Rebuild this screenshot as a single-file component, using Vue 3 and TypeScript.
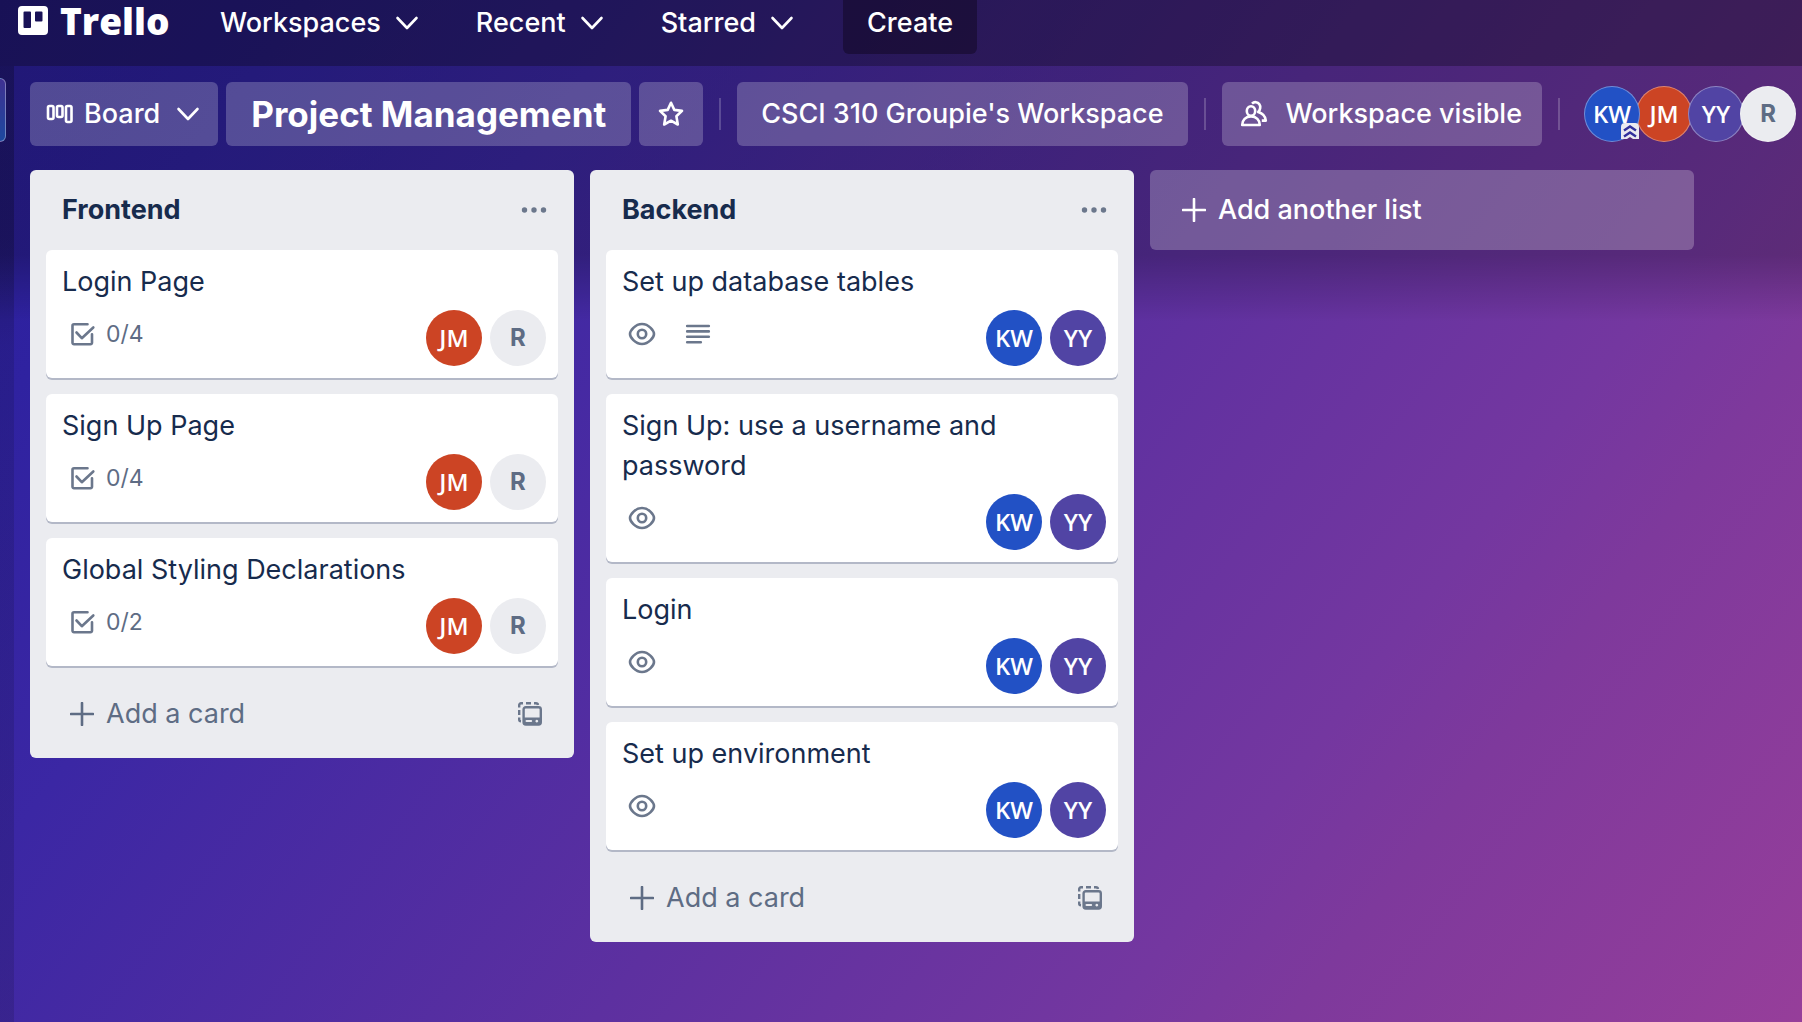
<script setup lang="ts">
interface Member {
  initials: string
  tone: string
}

interface Card {
  title: string
  watching?: boolean
  description?: boolean
  checklist?: string
  members: Member[]
}

interface List {
  name: string
  cards: Card[]
}

const kw: Member = { initials: 'KW', tone: 'blue' }
const jm: Member = { initials: 'JM', tone: 'red' }
const yy: Member = { initials: 'YY', tone: 'violet' }
const r: Member = { initials: 'R', tone: 'plain' }

const menus: string[] = ['Workspaces', 'Recent', 'Starred']
const boardMembers: Member[] = [kw, jm, yy, r]

const lists: List[] = [
  {
    name: 'Frontend',
    cards: [
      { title: 'Login Page', checklist: '0/4', members: [jm, r] },
      { title: 'Sign Up Page', checklist: '0/4', members: [jm, r] },
      { title: 'Global Styling Declarations', checklist: '0/2', members: [jm, r] },
    ],
  },
  {
    name: 'Backend',
    cards: [
      { title: 'Set up database tables', watching: true, description: true, members: [kw, yy] },
      { title: 'Sign Up: use a username and password', watching: true, members: [kw, yy] },
      { title: 'Login', watching: true, members: [kw, yy] },
      { title: 'Set up environment', watching: true, members: [kw, yy] },
    ],
  },
]
</script>

<template>
  <div class="app">
    <header class="topbar">
      <a class="logo" href="#" aria-label="Trello home">
        <svg width="30" height="30" viewBox="0 0 30 30" aria-hidden="true">
          <path
            fill="currentColor"
            fill-rule="evenodd"
            d="M4 0h22a4 4 0 0 1 4 4v21a4 4 0 0 1-4 4H4a4 4 0 0 1-4-4V4a4 4 0 0 1 4-4zm2.500 5.500a1 1 0 0 0-1 1v14.500a1 1 0 0 0 1 1h5.500a1 1 0 0 0 1-1V6.500a1 1 0 0 0-1-1zm11.500 0a1 1 0 0 0-1 1v8a1 1 0 0 0 1 1h5.500a1 1 0 0 0 1-1v-8a1 1 0 0 0-1-1z"
          />
        </svg>
        <span>Trello</span>
      </a>
      <nav class="menus">
        <button v-for="menu in menus" :key="menu" class="menu" type="button">
          {{ menu }}
          <svg width="24" height="16" viewBox="0 0 24 16" aria-hidden="true">
            <path d="M2.500 3 12 13 21.500 3" class="line" />
          </svg>
        </button>
      </nav>
      <button class="create" type="button">Create</button>
    </header>

    <div class="body">
      <aside class="rail">
        <button class="rail-toggle" type="button" aria-label="Expand sidebar"></button>
      </aside>

      <main class="board">
        <div class="board-header">
          <button class="chip view" type="button">
            <svg width="28" height="20" viewBox="0 0 28 20" aria-hidden="true">
              <g fill="none" stroke="currentColor" stroke-width="2.600">
                <rect x="2" y="2" width="5.500" height="13" rx="1.500" />
                <rect x="11" y="2" width="5.500" height="11" rx="1.500" />
                <rect x="20" y="2" width="5.500" height="16" rx="1.500" />
              </g>
            </svg>
            Board
            <svg class="caret" width="24" height="16" viewBox="0 0 24 16" aria-hidden="true">
              <path d="M2.500 3 12 13 21.500 3" class="line" />
            </svg>
          </button>
          <h1 class="chip title">Project Management</h1>
          <button class="chip star" type="button" aria-label="Star board">
            <svg width="28" height="28" viewBox="0 0 28 28" aria-hidden="true">
              <path
                d="M14 2.800 17.300 9.900 25 10.900 19.400 16.300 20.800 24.500 14 20.700 7.200 24.500 8.600 16.300 3 10.900 10.700 9.900z"
                fill="none"
                stroke="currentColor"
                stroke-width="2.600"
                stroke-linejoin="round"
              />
            </svg>
          </button>
          <span class="divider"></span>
          <button class="chip workspace" type="button">CSCI 310 Groupie's Workspace</button>
          <span class="divider"></span>
          <button class="chip visibility" type="button">
            <svg width="28" height="28" viewBox="0 0 28 28" aria-hidden="true">
              <g fill="none" stroke="currentColor" stroke-width="2.600" stroke-linejoin="round">
                <ellipse cx="11" cy="11" rx="4.200" ry="4.800" />
                <path d="M2.200 25c0-5 3.500-8.600 8.800-8.600s8.800 3.600 8.800 8.600z" />
                <path d="M12 3.600c1.200-1.200 2.600-1.600 4-1.400 3 .4 4.600 3 4.200 5.800-.2 1.800-1 3-2 4 4.500 1.300 7.200 4 7.600 8.600h-4" />
              </g>
            </svg>
            Workspace visible
          </button>
          <span class="divider"></span>
          <div class="facepile">
            <span
              v-for="(member, i) in boardMembers"
              :key="member.initials"
              class="avatar ringed"
              :class="member.tone"
            >
              {{ member.initials }}
              <svg v-if="i === 0" class="admin" width="18" height="18" viewBox="0 0 18 18" aria-hidden="true">
                <path d="M0 4q0-4 4-4h10q4 0 4 4v12H12l-3-2-3 2H0z" fill="#e9eaf0" />
                <path d="M3 7.500 9 3.500l6 4M3 13.500l6-4 6 4" fill="none" stroke="#31309c" stroke-width="2.400" />
              </svg>
            </span>
          </div>
        </div>

        <div class="lists">
          <section v-for="list in lists" :key="list.name" class="list">
            <div class="list-header">
              <h2>{{ list.name }}</h2>
              <button class="icon-button" type="button" aria-label="List actions">
                <svg width="28" height="8" viewBox="0 0 28 8" fill="currentColor" aria-hidden="true">
                  <circle cx="4.500" cy="4" r="2.700" />
                  <circle cx="14" cy="4" r="2.700" />
                  <circle cx="23.500" cy="4" r="2.700" />
                </svg>
              </button>
            </div>

            <article v-for="card in list.cards" :key="card.title" class="card">
              <h3>{{ card.title }}</h3>
              <div class="card-footer">
                <div class="badges">
                  <span v-if="card.watching" class="badge">
                    <svg width="28" height="28" viewBox="0 0 28 28" aria-hidden="true">
                      <g fill="none" stroke="currentColor" stroke-width="2.600">
                        <path d="M2 14c0-3 5-10 12-10S26 11 26 14s-5 10-12 10S2 17 2 14z" />
                        <circle cx="14" cy="14" r="4.200" />
                      </g>
                    </svg>
                  </span>
                  <span v-if="card.description" class="badge">
                    <svg width="28" height="28" viewBox="0 0 28 28" aria-hidden="true">
                      <path
                        d="M3.200 6h21.600M3.200 11.400h21.600M3.200 16.800h21.600M3.200 22.200h13.600"
                        fill="none"
                        stroke="currentColor"
                        stroke-width="2.600"
                        stroke-linecap="round"
                      />
                    </svg>
                  </span>
                  <span v-if="card.checklist" class="badge">
                    <svg width="28" height="28" viewBox="0 0 28 28" aria-hidden="true">
                      <g
                        fill="none"
                        stroke="currentColor"
                        stroke-width="2.600"
                        stroke-linecap="round"
                        stroke-linejoin="round"
                      >
                        <path d="M19.500 4.300H6a1.500 1.500 0 0 0-1.500 1.500v16.900a1.500 1.500 0 0 0 1.500 1.500h16.500a1.500 1.500 0 0 0 1.500-1.500v-8.500" />
                        <path d="M8.500 12.500l5.300 5.700L25.300 7.500" />
                      </g>
                    </svg>
                  </span>
                  <span v-if="card.checklist" class="badge-text">{{ card.checklist }}</span>
                </div>
                <div class="members">
                  <span
                    v-for="member in card.members"
                    :key="member.initials"
                    class="avatar"
                    :class="member.tone"
                  >{{ member.initials }}</span>
                </div>
              </div>
            </article>

            <div class="list-footer">
              <button class="add-card" type="button">
                <svg width="24" height="24" viewBox="0 0 24 24" aria-hidden="true">
                  <path d="M12 1v22M1 12h22" class="line" />
                </svg>
                Add a card
              </button>
              <button class="icon-button" type="button" aria-label="Create from template">
                <svg width="26" height="26" viewBox="0 0 26 26" aria-hidden="true">
                  <g fill="none" stroke="currentColor" stroke-width="2.400">
                    <path d="M2.200 6.500V4a1.800 1.800 0 0 1 1.800-1.800h2M9 2.200h5M17 2.200h2q1.800 0 2 1.800M2.200 9v5M2.200 16.500v2q0 1.700 1.800 1.800" />
                    <rect x="6.600" y="6.300" width="17.200" height="17.200" rx="2.200" />
                  </g>
                  <path
                    fill="currentColor"
                    fill-rule="evenodd"
                    d="M6.600 16.500h17.200v7H6.600zm3 2.400a1 1 0 0 0 0 2.200h4.500a1 1 0 0 0 0-2.200zm10.200-.2a1.400 1.400 0 1 0 .01 0z"
                  />
                </svg>
              </button>
            </div>
          </section>

          <button class="add-list" type="button">
            <svg width="24" height="24" viewBox="0 0 24 24" aria-hidden="true">
              <path d="M12 1v22M1 12h22" class="line" />
            </svg>
            Add another list
          </button>
        </div>
      </main>
    </div>
  </div>
</template>

<style>
body {
  margin: 0;
  background: #3b27a4;
}
</style>

<style scoped>
.app {
  min-height: 100vh;
  display: flex;
  flex-direction: column;
  overflow: hidden;
  box-sizing: border-box;
  font-family: Inter, "Liberation Sans", sans-serif;
  font-size: 27px;
  line-height: 40px;
  color: #fff;
  background:
    linear-gradient(to bottom, rgba(0, 0, 0, 0.24) 0, rgba(0, 0, 0, 0.24) 255px, transparent 322px),
    linear-gradient(127deg, #2a1e9c 0%, #2f22a0 12%, #3b27a4 25%, #5d30a0 53%, #7437a0 73%, #7e399c 80%, #963e9a 100%);
}

button {
  margin: 0;
  padding: 0;
  border: 0;
  background: none;
  color: inherit;
  font: inherit;
  white-space: nowrap;
  cursor: pointer;
}

h1,
h2,
h3 {
  margin: 0;
}

svg {
  display: block;
  flex: none;
}

.line {
  fill: none;
  stroke: currentColor;
  stroke-width: 2.6;
  stroke-linecap: round;
  stroke-linejoin: round;
}

.topbar {
  display: flex;
  align-items: flex-start;
  height: 66px;
  padding-left: 18px;
  background: rgba(8, 6, 20, 0.32);
}

.logo {
  display: flex;
  align-items: center;
  gap: 12px;
  width: 202px;
  height: 42px;
  color: #fff;
  text-decoration: none;
  font-family: "Open Sans", Lato, sans-serif;
  font-size: 37px;
  font-weight: 800;
}

.menus {
  display: flex;
  gap: 57px;
  height: 46px;
}

.menu {
  display: flex;
  align-items: center;
  gap: 14px;
  font-weight: 500;
}

.create {
  height: 54px;
  margin-left: 49px;
  padding: 0 24px 8px;
  border-radius: 0 0 6px 6px;
  background: rgba(16, 6, 32, 0.5);
  font-weight: 500;
}

.body {
  flex: 1;
  display: flex;
}

.rail {
  width: 14px;
  padding-top: 12px;
  background: linear-gradient(to bottom, rgba(8, 6, 24, 0.3) 0, rgba(8, 6, 24, 0.3) 170px, rgba(8, 6, 24, 0.15) 280px);
}

.rail-toggle {
  display: block;
  width: 6px;
  height: 64px;
  border: 1px solid rgba(255, 255, 255, 0.35);
  border-left: 0;
  border-radius: 0 8px 8px 0;
  background: linear-gradient(to bottom, #3f3192, #1d489f);
}

.board {
  flex: 1;
  padding: 16px 4px 16px 16px;
}

.board-header {
  display: flex;
  align-items: center;
  gap: 8px;
}

.chip {
  display: flex;
  align-items: center;
  height: 64px;
  padding: 0 24px;
  box-sizing: border-box;
  border-radius: 6px;
  background: rgba(255, 255, 255, 0.22);
  font-weight: 500;
  white-space: nowrap;
}

.view {
  padding: 0 18px 0 16px;
  gap: 10px;
}

.caret {
  margin-left: 6px;
}

.title {
  padding: 0 25px;
  font-size: 35px;
  font-weight: 700;
}

.star {
  padding: 0 18px;
}

.divider {
  width: 2px;
  height: 32px;
  margin: 0 8px;
  background: rgba(255, 255, 255, 0.2);
}

.visibility {
  padding: 0 20px 0 18px;
  gap: 18px;
}

.facepile {
  display: flex;
  margin-left: 8px;
}

.avatar {
  position: relative;
  display: flex;
  align-items: center;
  justify-content: center;
  width: 56px;
  height: 56px;
  flex: none;
  box-sizing: border-box;
  border-radius: 50%;
  font-family: "Open Sans", "Noto Sans", sans-serif;
  font-size: 24px;
  font-weight: 600;
}

.ringed {
  border: 1px solid rgba(255, 255, 255, 0.35);
}

.ringed + .ringed {
  margin-left: -4px;
}

.blue {
  z-index: 1;
  background: #2251c5;
}

.red {
  background: #cc4424;
}

.violet {
  background: #5144a4;
}

.plain {
  background: #ebecf0;
  color: #5e6c84;
  font-family: Inter, sans-serif;
  font-weight: 700;
}

.admin {
  position: absolute;
  right: 0;
  bottom: 0;
}

.lists {
  display: flex;
  align-items: flex-start;
  gap: 16px;
  margin-top: 24px;
}

.list {
  display: flex;
  flex-direction: column;
  gap: 16px;
  width: 544px;
  padding: 16px;
  box-sizing: border-box;
  border-radius: 6px;
  background: #ebecf0;
  color: #172b4d;
}

.list-header {
  display: flex;
  align-items: center;
  justify-content: space-between;
  height: 48px;
  padding: 0 10px 0 16px;
}

h2 {
  font-size: 27px;
  line-height: 40px;
  font-weight: 700;
}

.icon-button {
  color: #6b778c;
}

.card {
  padding: 12px 12px 12px 16px;
  border-radius: 6px;
  background: #fff;
  box-shadow: 0 2px 0 #b3b8c7;
}

.card h3 {
  font-size: 27px;
  line-height: 40px;
  font-weight: 400;
}

.card-footer {
  display: flex;
  justify-content: space-between;
  padding-top: 8px;
}

.badges {
  display: flex;
  height: 48px;
  gap: 16px;
  color: #6b778c;
}

.badge {
  display: flex;
  align-items: center;
  justify-content: center;
  width: 40px;
}

.badge-text {
  margin-left: -12px;
  font-size: 23px;
  line-height: 48px;
  color: #5e6c84;
}

.members {
  display: flex;
  gap: 8px;
  color: #fff;
}

.members .plain {
  color: #5e6c84;
}

.list-footer {
  display: flex;
  align-items: center;
  justify-content: space-between;
  height: 60px;
  padding: 4px 15px 0 24px;
  box-sizing: border-box;
  color: #5e6c84;
}

.add-card,
.add-list {
  display: flex;
  align-items: center;
  gap: 12px;
}

.add-list {
  width: 544px;
  height: 80px;
  padding: 0 32px;
  border-radius: 6px;
  background: rgba(255, 255, 255, 0.24);
  font-weight: 500;
}
</style>
